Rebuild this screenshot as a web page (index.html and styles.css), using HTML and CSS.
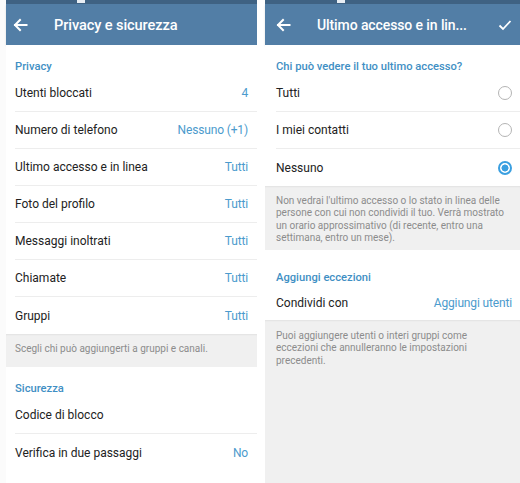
FILE: index.html
```html
<!DOCTYPE html>
<html lang="it">
<head>
<meta charset="utf-8">
<link rel="stylesheet" href="styles.css">
</head>
<body>
<div class="screen">
  <div class="edge"></div>
  <section class="panel panel-left">
    <div class="status"><span class="mark mark-left"></span></div>
    <header class="appbar">
      <svg class="back" viewBox="0 0 16 16" width="16" height="16"><path d="M14.5 8H3M8 3L3 8l5 5" fill="none" stroke="#fff" stroke-width="2" stroke-linecap="square"/></svg>
      <h1 class="title">Privacy e sicurezza</h1>
    </header>
    <div class="list">
      <div class="section-title">Privacy</div>
      <div class="row"><span class="label">Utenti bloccati</span><span class="value">4</span></div>
      <div class="row"><span class="label">Numero di telefono</span><span class="value">Nessuno (+1)</span></div>
      <div class="row"><span class="label">Ultimo accesso e in linea</span><span class="value">Tutti</span></div>
      <div class="row"><span class="label">Foto del profilo</span><span class="value">Tutti</span></div>
      <div class="row"><span class="label">Messaggi inoltrati</span><span class="value">Tutti</span></div>
      <div class="row"><span class="label">Chiamate</span><span class="value">Tutti</span></div>
      <div class="row row-last"><span class="label">Gruppi</span><span class="value">Tutti</span></div>
    </div>
    <div class="info info-short">Scegli chi può aggiungerti a gruppi e canali.</div>
    <div class="list">
      <div class="section-title">Sicurezza</div>
      <div class="row"><span class="label">Codice di blocco</span></div>
      <div class="row row-last"><span class="label">Verifica in due passaggi</span><span class="value">No</span></div>
    </div>
  </section>
  <div class="gap"></div>
  <section class="panel panel-right">
    <div class="status"><span class="mark mark-right"></span></div>
    <header class="appbar">
      <svg class="back" viewBox="0 0 16 16" width="16" height="16"><path d="M14.5 8H3M8 3L3 8l5 5" fill="none" stroke="#fff" stroke-width="2" stroke-linecap="square"/></svg>
      <h1 class="title">Ultimo accesso e in lin...</h1>
      <svg class="check" viewBox="0 0 16 16" width="16" height="16"><path d="M2.5 8.5l3.5 3.5 7.5-8" fill="none" stroke="#fff" stroke-width="1.8"/></svg>
    </header>
    <div class="list">
      <div class="section-title">Chi può vedere il tuo ultimo accesso?</div>
      <div class="row"><span class="label">Tutti</span><span class="radio"></span></div>
      <div class="row"><span class="label">I miei contatti</span><span class="radio"></span></div>
      <div class="row row-last"><span class="label">Nessuno</span><span class="radio radio-on"></span></div>
    </div>
    <div class="info info-long">Non vedrai l'ultimo accesso o lo stato in linea delle persone con cui non condividi il tuo. Verrà mostrato un orario approssimativo (di recente, entro una settimana, entro un mese).</div>
    <div class="list">
      <div class="section-title section-title-loose">Aggiungi eccezioni</div>
      <div class="row row-last row-short"><span class="label">Condividi con</span><span class="value">Aggiungi utenti</span></div>
    </div>
    <div class="info info-fill">Puoi aggiungere utenti o interi gruppi come eccezioni che annulleranno le impostazioni precedenti.</div>
  </section>
</div>
</body>
</html>
```

FILE: styles.css
```css
* { box-sizing: border-box; margin: 0; padding: 0; }

html, body {
  width: 520px;
  height: 483px;
  overflow: hidden;
  background: #fff;
}

body {
  font-family: Roboto, "Noto Sans", "Liberation Sans", sans-serif;
  color: #222;
}

.screen {
  display: flex;
  height: 483px;
}

.edge { width: 6px; flex: none; background: #fbfbfb; }
.gap { width: 8px; flex: none; background: #fff; }

.panel {
  display: flex;
  flex-direction: column;
  background: #fff;
  height: 483px;
}
.panel-left { width: 251px; flex: none; }
.panel-right { flex: 1; background: #f0f0f0; }

.status {
  height: 4px;
  background: #3f6283;
  position: relative;
}
.mark {
  position: absolute;
  top: 0;
  width: 8px;
  height: 3px;
  background: #e8eef4;
}
.mark-left { left: 71px; }
.mark-right { left: 72px; }

.appbar {
  height: 41px;
  background: #527ea6;
  display: flex;
  align-items: center;
  color: #fff;
  box-shadow: 0 1px 2px rgba(0,0,0,0.12);
}
.back { margin-left: 6px; flex: none; }
.panel-right .back { margin-left: 10px; }
.title {
  font-size: 14.6px;
  font-weight: 500;
  margin-left: 26px;
  letter-spacing: -0.1px;
  white-space: nowrap;
  flex: 1;
}
.panel-right .title { margin-left: 26px; font-size: 14px; }
.check { margin-right: 7px; flex: none; }

.list { background: #fff; }

.section-title {
  font-size: 11.2px;
  font-weight: 500;
  color: #3f8fc4;
  padding: 15px 0 0 9px;
  height: 30px;
}
.section-title-loose { height: 36px; padding-top: 21px; }

.row {
  height: 37px;
  margin-left: 9px;
  padding-right: 9px;
  display: flex;
  align-items: center;
  justify-content: space-between;
  border-bottom: 1px solid #ededed;
  font-size: 12px;
}
.row-last { border-bottom: none; }
.row-short { height: 34px; padding-bottom: 1px; }

.label { color: #222; }
.value { color: #4c9bcd; letter-spacing: -0.15px; }

.panel-right .section-title { padding-left: 11px; }
.panel-right .row { margin-left: 11px; padding-right: 8px; }

.radio {
  width: 14px;
  height: 14px;
  border-radius: 50%;
  border: 1.5px solid #b4b4b4;
  flex: none;
}
.radio-on {
  border: 2px solid #3a9fe0;
  background: radial-gradient(circle, #3a9fe0 0 3.2px, transparent 3.8px);
}

.info {
  background: #f0f0f0;
  color: #8c8c8c;
  font-size: 10px;
  line-height: 12.4px;
  box-shadow: inset 0 2px 2px -1px rgba(0,0,0,0.06);
}
.info-short { height: 33px; padding: 9px 9px 0 9px; }
.info-long { height: 64px; padding: 9px 10px 0 11px; }
.info-fill { flex: 1; padding: 10px 10px 0 11px; }
```
